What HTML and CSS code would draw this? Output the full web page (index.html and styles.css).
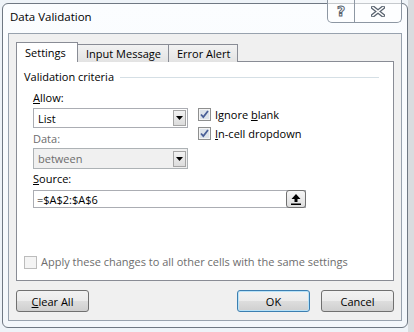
FILE: index.html
```html
<!DOCTYPE html>
<html>
  <head>
    <title>Data Validation</title>
    <link rel="stylesheet" href="styles.css">
  </head>
  <body>
    <div class="screen">
      <div class="window">
        <div class="titlebar">
          <span class="title">Data Validation</span>
          <div class="caption">
            <span class="cap-btn help">?</span>
            <span class="cap-btn close">
              <svg width="14" height="11" viewBox="0 0 14 11"><path d="M2 1.5 L12 9.5 M12 1.5 L2 9.5" stroke="#5a6470" stroke-width="4" stroke-linecap="square"/><path d="M2 1.5 L12 9.5 M12 1.5 L2 9.5" stroke="#fff" stroke-width="1.6" stroke-linecap="square"/></svg>
            </span>
          </div>
        </div>

        <div class="client">
          <div class="tabs">
            <div class="tab active">Settings</div>
            <div class="tab">Input Message</div>
            <div class="tab">Error Alert</div>
          </div>

          <div class="panel">
            <div class="group-head"><span>Validation criteria</span><i></i></div>

            <div class="criteria">
              <div class="fields">
                <div class="label"><u>A</u>llow:</div>
                <div class="combo">
                  <span>List</span>
                  <span class="drop"><svg width="7" height="4" viewBox="0 0 7 4"><path d="M0 0 H7 L3.5 4 Z" fill="#000"/></svg></span>
                </div>
                <div class="label disabled">Data:</div>
                <div class="combo disabled">
                  <span>between</span>
                  <span class="drop"><svg width="7" height="4" viewBox="0 0 7 4"><path d="M0 0 H7 L3.5 4 Z" fill="#000"/></svg></span>
                </div>
              </div>
              <div class="checks">
                <div class="check">
                  <svg class="box" width="13" height="13" viewBox="0 0 13 13"><rect x="0.5" y="0.5" width="12" height="12" fill="#f4f4f4" stroke="#8e8f8f"/><rect x="2" y="2" width="9" height="9" fill="#dde3ea"/><path d="M3 6.5 L5.3 9 L10 3" fill="none" stroke="#4a5f97" stroke-width="1.8"/></svg>
                  <span>Ignore <u>b</u>lank</span>
                </div>
                <div class="check">
                  <svg class="box" width="13" height="13" viewBox="0 0 13 13"><rect x="0.5" y="0.5" width="12" height="12" fill="#f4f4f4" stroke="#8e8f8f"/><rect x="2" y="2" width="9" height="9" fill="#dde3ea"/><path d="M3 6.5 L5.3 9 L10 3" fill="none" stroke="#4a5f97" stroke-width="1.8"/></svg>
                  <span><u>I</u>n-cell dropdown</span>
                </div>
              </div>
            </div>

            <div class="label source-label"><u>S</u>ource:</div>
            <div class="refedit">
              <span>=$A$2:$A$6</span>
              <span class="collapse"><svg width="10" height="11" viewBox="0 0 10 11"><path d="M5 0 L9.5 5 H6.5 V8 H3.5 V5 H0.5 Z" fill="#000"/><rect x="0" y="9.5" width="10" height="1.5" fill="#000"/></svg></span>
            </div>

            <div class="apply">
              <svg class="box" width="13" height="13" viewBox="0 0 13 13"><rect x="0.5" y="0.5" width="12" height="12" fill="#f4f4f4" stroke="#bcbcbc"/></svg>
              <span>Apply these changes to all other cells with the same settings</span>
            </div>
          </div>

          <div class="buttons">
            <button class="btn"><u>C</u>lear All</button>
            <span class="spacer"></span>
            <button class="btn default">OK</button>
            <button class="btn">Cancel</button>
          </div>
        </div>
      </div>
    </div>
  </body>
</html>
```

FILE: styles.css
```css
body { margin: 0; font-family: "Open Sans", "Noto Sans", sans-serif; font-size: 11px; color: #000; }

.screen { width: 414px; height: 332px; overflow: hidden; background: linear-gradient(to right, #eef3f8 0, #eef3f8 408px, #d9dcdf 408px); padding-top: 3px; box-sizing: border-box; }

.window { position: relative; margin-left: 2px; width: 406px; height: 325px; box-sizing: border-box; border: 1px solid #6f7883; border-radius: 6px; background: linear-gradient(to bottom, #fbfdff, #f3f7fb); display: flex; flex-direction: column; }

.titlebar { height: 29px; padding: 5px 0 0 7px; box-sizing: border-box; }
.title { line-height: 16px; font-size: 11.5px; }

.caption { position: absolute; top: -4px; right: 5px; display: flex; height: 22px; border: 1px solid #8d97a3; border-top: none; border-radius: 0 0 5px 5px; background: rgba(255, 255, 255, 0.6); }
.cap-btn { display: flex; align-items: center; justify-content: center; height: 22px; }
.help { width: 26px; border-right: 1px solid #8d97a3; font-family: "DejaVu Sans", sans-serif; font-weight: bold; font-size: 14px; color: #fff; -webkit-text-stroke: 1px #5a6470; }
.close { width: 46px; }

.client { flex: 1; margin: 0 5px 6px 5px; border: 1px solid #98a2ae; background: #f0f0f0; padding: 8px 7px 0 7px; display: flex; flex-direction: column; }

.tabs { display: flex; align-items: flex-end; height: 20px; position: relative; z-index: 1; white-space: nowrap; }
.tab { height: 18px; line-height: 17px; padding: 0 8px; border: 1px solid #898c95; border-bottom: none; margin-left: -1px; box-sizing: border-box; background: linear-gradient(to bottom, #f2f2f2, #e3e3e3); }
.tab:first-child { margin-left: 0; }
.tab.active { height: 20px; background: #fff; width: 62px; line-height: 19px; position: relative; z-index: 2; }
.tab:nth-child(2) { width: 92px; }
.tab:nth-child(3) { width: 70px; }

.panel { margin-top: -1px; width: 378px; height: 220px; box-sizing: border-box; border: 1px solid #898c95; background: #fff; padding: 7px 7px 10px 7px; display: flex; flex-direction: column; }

.group-head { display: flex; align-items: center; gap: 6px; line-height: 16px; }
.group-head i { flex: 1; height: 1px; background: #d5dfe5; margin-right: 7px; }

.criteria { display: flex; margin-top: 5px; padding-left: 9px; }
.fields { width: 155px; }
.label { line-height: 16px; }
.label.disabled { color: #6d6d6d; }

.combo { height: 20px; margin: 2px 0 3px 0; border: 1px solid #abadb3; box-sizing: border-box; display: flex; align-items: center; padding-left: 4px; background: #fff; }
.combo span:first-child { flex: 1; }
.combo.disabled { height: 21px; margin: 1px 0 2px 0; background: #f0f0f0; border-color: #adb2b5; color: #6d6d6d; }
.drop { width: 13px; height: 16px; margin-right: 1px; border: 1px solid #a5a5a5; box-sizing: border-box; background: linear-gradient(to bottom, #f2f2f2, #dcdcdc); display: flex; align-items: center; justify-content: center; }

.checks { margin-left: 10px; padding-top: 18px; display: flex; flex-direction: column; gap: 6px; }
.check { display: flex; align-items: center; gap: 4px; line-height: 13px; }

.source-label { padding-left: 9px; }
.refedit { margin: 3px 0 0 9px; width: 273px; height: 18px; box-sizing: border-box; border: 1px solid #abadb3; display: flex; align-items: center; padding-left: 3px; }
.refedit span:first-child { flex: 1; }
.collapse { width: 20px; height: 18px; margin-right: -1px; box-sizing: border-box; border: 1px solid #707070; border-radius: 3px; background: linear-gradient(to bottom, #f6f6f6, #dedede); display: flex; align-items: center; justify-content: center; }

.apply { margin-top: auto; display: flex; align-items: center; gap: 4px; color: #6d6d6d; line-height: 16px; }

.buttons { display: flex; gap: 11px; margin-top: 9px; }
.spacer { flex: 1; }
.btn { width: 73px; height: 22px; font: inherit; color: #000; padding: 0; border: 1px solid #707070; border-radius: 3px; background: linear-gradient(to bottom, #f2f2f2 0, #ebebeb 50%, #dddddd 51%, #cfcfcf 100%); }
.btn.default { border-color: #3c7fb1; box-shadow: inset 0 0 0 1px #b8e2f8; }
```
